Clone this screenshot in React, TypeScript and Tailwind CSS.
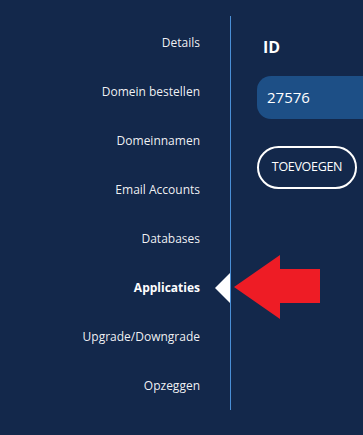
import React from 'react';

const items = [
  'Details',
  'Domein bestellen',
  'Domeinnamen',
  'Email Accounts',
  'Databases',
  'Applicaties',
  'Upgrade/Downgrade',
  'Opzeggen',
];

export default function App() {
  return (
    <div
      className="min-h-screen w-full bg-[#13284b] text-white overflow-hidden"
      style={{ fontFamily: '"Open Sans", "Noto Sans", sans-serif' }}
    >
      <div className="flex pt-4 relative">
        {/* Side nav */}
        <div className="w-[231px] shrink-0 border-r border-[#4a8fd6] pt-[2px] pr-[30px]">
          {items.map((label) => {
            const active = label === 'Applicaties';
            return (
              <div key={label} className="relative h-[49px] flex items-center justify-end">
                <span className={active ? 'text-[12px] font-bold' : 'text-[12px] text-white/95'}>
                  {label}
                </span>
                {active && (
                  <span className="absolute right-[-30px] top-1/2 -translate-y-1/2 w-0 h-0 border-y-[15px] border-y-transparent border-r-[15px] border-r-white" />
                )}
              </div>
            );
          })}
        </div>

        {/* Content */}
        <div className="flex-1 pl-[26px]">
          <div className="h-[60px] flex items-center pt-[1px] pl-[6px]">
            <span className="text-[16px] font-bold">ID</span>
          </div>
          <div className="h-[43px] rounded-l-[14px] bg-[#1d4f86] flex items-center pl-[10px] text-[15px]">
            27576
          </div>
          <button
            type="button"
            className="mt-[27px] h-[43px] w-[100px] rounded-full border-2 border-white text-[12.5px] tracking-tight"
          >
            TOEVOEGEN
          </button>
        </div>

        {/* Red arrow */}
        <svg
          className="absolute left-[234px] top-[255px]"
          width="88"
          height="64"
          viewBox="0 0 88 64"
        >
          <polygon points="0,32 46,0 46,14 86,14 86,48 46,48 46,64" fill="#ee1c25" />
        </svg>
      </div>
    </div>
  );
}
